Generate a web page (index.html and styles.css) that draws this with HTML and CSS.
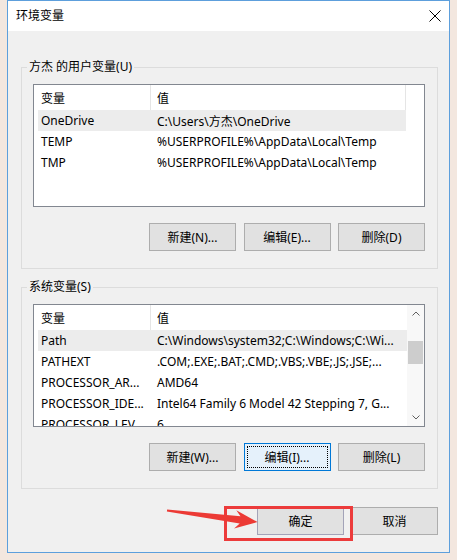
FILE: index.html
```html
<!DOCTYPE html>
<html lang="zh">

<head>
  <meta charset="UTF-8">
  <meta name="viewport" content="width=device-width, initial-scale=1.0">
  <title>环境变量</title>
  <link rel="stylesheet" href="styles.css">
</head>

<body>
  <div class="screen">
    <div class="dialog">
      <div class="titlebar">
        <span class="title">环境变量</span>
        <svg class="close" width="12" height="12" viewBox="0 0 12 12">
          <path d="M0.5 0.5L11.5 11.5M11.5 0.5L0.5 11.5" stroke="#000" stroke-width="1" fill="none"/>
        </svg>
      </div>
      <div class="content">
        <fieldset class="group">
          <legend>方杰 的用户变量(U)</legend>
          <div class="listview list-user">
            <div class="list-main">
              <div class="list-head">
                <div class="col-name">变量</div>
                <div class="col-value">值</div>
              </div>
              <div class="row selected">
                <div class="col-name">OneDrive</div>
                <div class="col-value">C:\Users\方杰\OneDrive</div>
              </div>
              <div class="row">
                <div class="col-name">TEMP</div>
                <div class="col-value">%USERPROFILE%\AppData\Local\Temp</div>
              </div>
              <div class="row">
                <div class="col-name">TMP</div>
                <div class="col-value">%USERPROFILE%\AppData\Local\Temp</div>
              </div>
            </div>
          </div>
          <div class="btn-row">
            <button class="btn">新建(N)...</button>
            <button class="btn">编辑(E)...</button>
            <button class="btn">删除(D)</button>
          </div>
        </fieldset>

        <fieldset class="group">
          <legend>系统变量(S)</legend>
          <div class="listview list-system">
            <div class="list-main">
              <div class="list-head">
                <div class="col-name">变量</div>
                <div class="col-value">值</div>
              </div>
              <div class="row selected">
                <div class="col-name">Path</div>
                <div class="col-value">C:\Windows\system32;C:\Windows;C:\Wi...</div>
              </div>
              <div class="row">
                <div class="col-name">PATHEXT</div>
                <div class="col-value">.COM;.EXE;.BAT;.CMD;.VBS;.VBE;.JS;.JSE;...</div>
              </div>
              <div class="row">
                <div class="col-name">PROCESSOR_AR...</div>
                <div class="col-value">AMD64</div>
              </div>
              <div class="row">
                <div class="col-name">PROCESSOR_IDE...</div>
                <div class="col-value">Intel64 Family 6 Model 42 Stepping 7, G...</div>
              </div>
              <div class="row">
                <div class="col-name">PROCESSOR_LEV...</div>
                <div class="col-value">6</div>
              </div>
            </div>
            <div class="scrollbar">
              <div class="sb-btn">
                <svg width="8" height="5" viewBox="0 0 8 5"><path d="M0.5 4.5L4 1L7.5 4.5" stroke="#606060" fill="none"/></svg>
              </div>
              <div class="sb-track">
                <div class="sb-thumb"></div>
              </div>
              <div class="sb-btn">
                <svg width="8" height="5" viewBox="0 0 8 5"><path d="M0.5 0.5L4 4L7.5 0.5" stroke="#606060" fill="none"/></svg>
              </div>
            </div>
          </div>
          <div class="btn-row">
            <button class="btn">新建(W)...</button>
            <button class="btn focused">编辑(I)...</button>
            <button class="btn">删除(L)</button>
          </div>
        </fieldset>

        <div class="dialog-actions">
          <button class="btn default">确定</button>
          <button class="btn">取消</button>
        </div>
      </div>
    </div>

    <!-- 标注：红框 + 箭头 -->
    <div class="mark-box"></div>
    <svg class="mark-arrow" width="100" height="40" viewBox="160 500 100 40">
      <polygon points="167.1,509.6 240.5,516.2 236.3,510.2 257.5,522 234.1,528.4 239.7,523.6 166.9,511.4" fill="#ec3a35"/>
    </svg>
  </div>
</body>

</html>
```

FILE: styles.css
```css
*{
  box-sizing: border-box;
}
html,body{
  margin: 0;
}
body{
  width: 457px;
  height: 560px;
  overflow: hidden;
  background: #f3e7df;
  font-family: "Noto Sans", "Noto Sans CJK SC", sans-serif;
  font-size: 12px;
  color: #000;
}
.screen{
  position: relative;
  height: 560px;
  padding-left: 7px;
}
.dialog{
  width: 443px;
  height: 553px;
  border: 1px solid #5d9fdc;
  background: #f0f0f0;
  display: flex;
  flex-direction: column;
}
.titlebar{
  height: 30px;
  flex-shrink: 0;
  background: #fff;
  display: flex;
  align-items: center;
  justify-content: space-between;
  padding: 0 8px;
}
.title{
  line-height: 16px;
}
.close{
  display: block;
}
.content{
  flex: 1;
  padding: 28px 11px 0 13px;
}
.group{
  margin: 0;
  padding: 9px 12px 17px 11px;
  border: 1px solid #dcdcdc;
  min-width: 0;
}
.group + .group{
  margin-top: 10px;
}
.group legend{
  padding: 0 2px;
  margin-left: -6px;
  line-height: 16px;
}
.listview{
  height: 123px;
  border: 1px solid #828790;
  background: #fff;
  display: flex;
  overflow: hidden;
}
.list-main{
  flex: 1;
  min-width: 0;
}
.list-head{
  height: 25px;
  display: flex;
}
.list-head div{
  height: 100%;
  display: flex;
  align-items: center;
}
.list-head .col-name{
  width: 117px;
  padding-left: 7px;
  border-right: 1px solid #e5e5e5;
}
.list-head .col-value{
  padding-left: 6px;
}
.list-user .list-head .col-value{
  width: 255px;
  border-right: 1px solid #e5e5e5;
}
.row{
  height: 21px;
  margin-left: 4px;
  display: flex;
  align-items: center;
  white-space: nowrap;
}
.list-user .row{
  margin-right: 18px;
}
.row.selected{
  background: #ececec;
}
.row div{
  overflow: hidden;
}
.row .col-name{
  width: 113px;
  flex-shrink: 0;
  padding-left: 3px;
}
.row .col-value{
  flex: 1;
  padding-left: 6px;
}
.scrollbar{
  width: 17px;
  flex-shrink: 0;
  background: #f8f8f8;
  display: flex;
  flex-direction: column;
}
.sb-btn{
  height: 17px;
  display: flex;
  align-items: center;
  justify-content: center;
}
.sb-btn svg{
  display: block;
}
.sb-track{
  flex: 1;
  padding: 19px 1px 0;
}
.sb-thumb{
  height: 23px;
  background: #cdcdcd;
}
.btn-row{
  display: flex;
  justify-content: flex-end;
  gap: 7.5px;
  margin-top: 16px;
}
.btn{
  width: 87px;
  height: 28px;
  padding: 0;
  border: 1px solid #adadad;
  background: #e1e1e1;
  font: inherit;
  color: #000;
}
.btn.focused{
  border-color: #0078d7;
  background: #e5f1fb;
  outline: 1px dotted #000;
  outline-offset: -4px;
}
.btn.default{
  border-color: #a3a3b8;
}
.dialog-actions{
  display: flex;
  justify-content: flex-end;
  gap: 7px;
  margin-top: 18px;
}
.mark-box{
  position: absolute;
  left: 224px;
  top: 506px;
  width: 129px;
  height: 35px;
  border: 3px solid #ec3b3b;
}
.mark-arrow{
  position: absolute;
  left: 160px;
  top: 500px;
}
```
